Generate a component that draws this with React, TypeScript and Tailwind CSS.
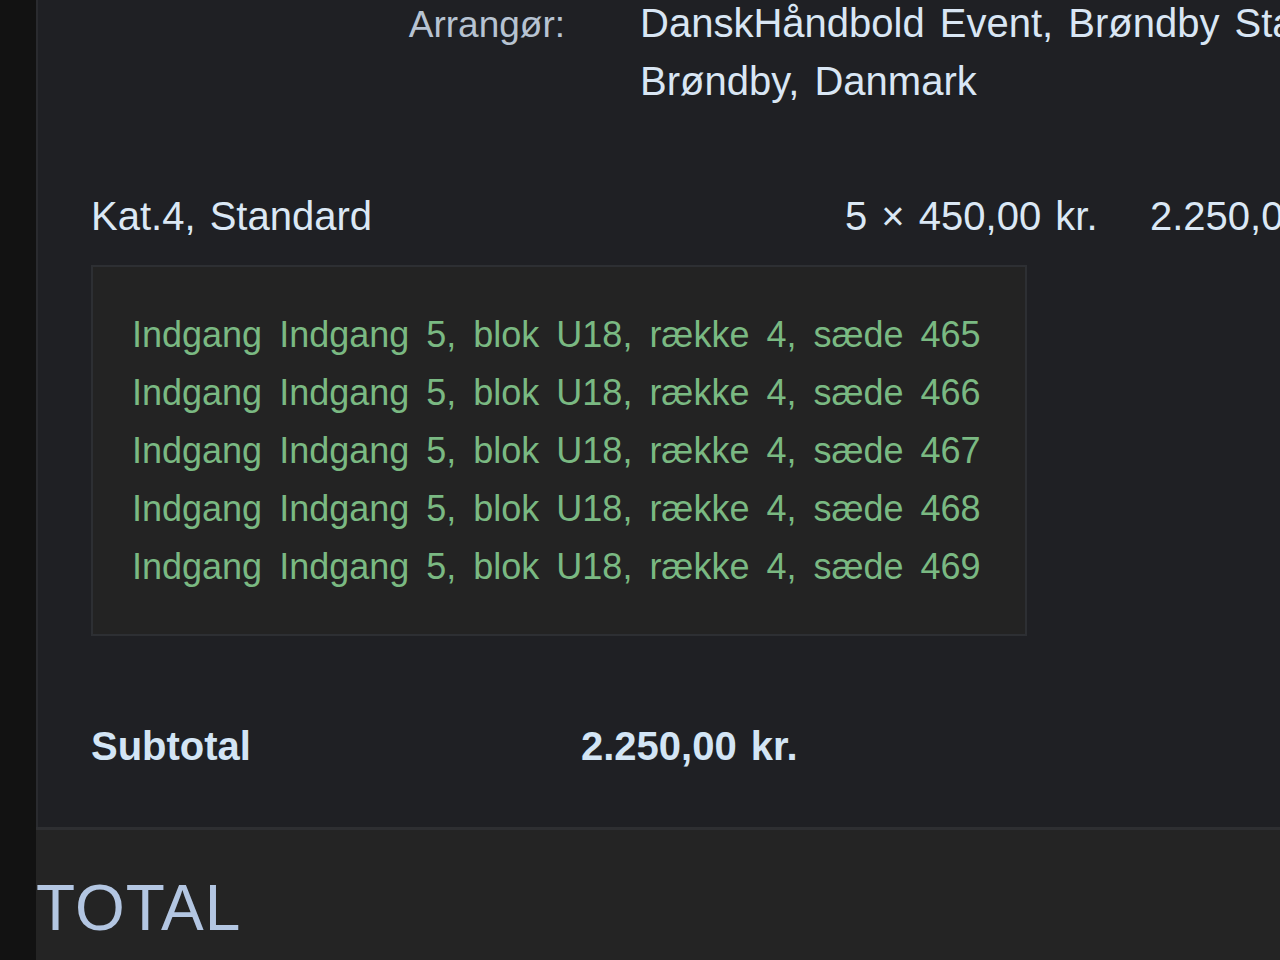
import React from "react";

const seats = [465, 466, 467, 468, 469];

export default function App() {
  return (
    <div
      className="w-[1280px] h-[960px] overflow-hidden flex bg-[#121212]"
      style={{ fontFamily: '"Liberation Sans", Arial, sans-serif' }}
    >
      <div className="w-[36px] shrink-0 bg-[#121212]" />
      <div className="flex flex-col w-[1800px] shrink-0">
        <div className="h-[827px] shrink-0 bg-[#1f2024] border-l-2 border-[#2a2b2f] pl-[53px] flex flex-col overflow-hidden">
          {/* Arrangør row */}
          <div className="flex items-baseline -mt-[6px] leading-[58px] [word-spacing:4px]">
            <div className="w-[474px] shrink-0 text-right text-[37px] text-[#b7c3d2]">Arrangør:</div>
            <div className="ml-[75px] w-[1000px] text-[40px] text-[#d9e6f4]">
              <div>DanskHåndbold Event, Brøndby Stadion,</div>
              <div>Brøndby, Danmark</div>
            </div>
          </div>

          {/* Ticket line */}
          <div className="flex items-baseline mt-[82px] text-[40px] leading-[48px] text-[#dbe8f5] [word-spacing:3px]">
            <div className="w-[754px] shrink-0">Kat.4, Standard</div>
            <div className="w-[305px] shrink-0">5 × 450,00 kr.</div>
            <div className="shrink-0">2.250,00 kr.</div>
          </div>

          {/* Seats box */}
          <div className="mt-[25px] w-[936px] border-2 border-[#2d2f33] bg-[#232323] pl-[39px] pt-[39px] pb-[38px]">
            {seats.map((s) => (
              <div
                key={s}
                className="text-[36px] leading-[58px] [word-spacing:7px] text-[#7ab982]"
              >
                Indgang Indgang 5, blok U18, række 4, sæde {s}
              </div>
            ))}
          </div>

          {/* Subtotal */}
          <div className="flex items-baseline mt-[86px] text-[40px] leading-[48px] font-bold text-[#d3e5f5] [word-spacing:3px]">
            <div className="w-[490px] shrink-0">Subtotal</div>
            <div className="shrink-0">2.250,00 kr.</div>
          </div>
        </div>

        <div className="h-[3px] shrink-0 bg-[#2e2f32]" />

        <div className="flex-1 bg-[#242424]">
          <div className="mt-[42px] text-[64px] leading-[72px] tracking-[1px] text-[#b3c6e2]">TOTAL</div>
        </div>
      </div>
    </div>
  );
}
